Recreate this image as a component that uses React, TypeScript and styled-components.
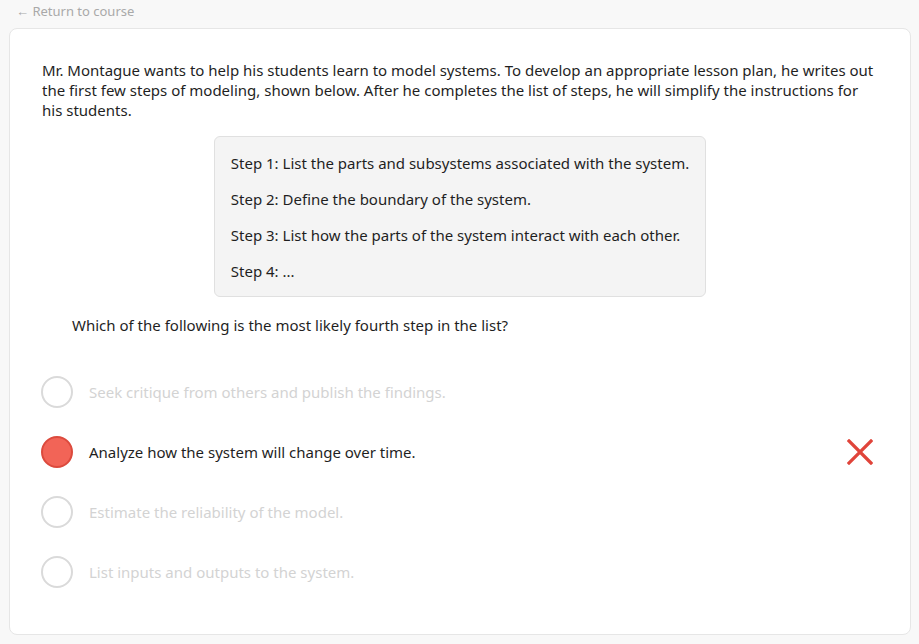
import styled, { createGlobalStyle } from "styled-components";

const GlobalStyle = createGlobalStyle`
  html, body {
    margin: 0;
    padding: 0;
    background: #f8f8f8;
  }
  body {
    font-family: "Segoe UI", "Noto Sans", "Open Sans", sans-serif;
    color: #1f1f1f;
  }
`;

interface IChoice {
  text: string;
  selected?: boolean;
}

const choices: IChoice[] = [
  { text: "Seek critique from others and publish the findings." },
  { text: "Analyze how the system will change over time.", selected: true },
  { text: "Estimate the reliability of the model." },
  { text: "List inputs and outputs to the system." },
];

const steps = [
  "Step 1: List the parts and subsystems associated with the system.",
  "Step 2: Define the boundary of the system.",
  "Step 3: List how the parts of the system interact with each other.",
  "Step 4: ...",
];

const Page = styled.div`
  padding: 3px 8px 9px 9px;
  min-height: 100vh;
  box-sizing: border-box;
  display: flex;
  flex-direction: column;
`;
const BackLink = styled.a`
  font-size: 13px;
  color: #a9a9a9;
  padding-left: 7px;
  height: 25px;
  line-height: 16px;
  text-decoration: none;
`;
const Card = styled.div`
  flex: 1;
  background: #fff;
  border: 1px solid #e6e6e6;
  border-radius: 8px;
  padding: 31px 32px 0 32px;
`;
const Prompt = styled.p`
  margin: 0;
  font-size: 15px;
  line-height: 20px;
  color: #1f1f1f;
`;
const StepBox = styled.div`
  width: fit-content;
  margin: 16px auto 0;
  background: #f4f4f4;
  border: 1px solid #e0e0e0;
  border-radius: 6px;
  padding: 16px 16px 15px;
  display: flex;
  flex-direction: column;
  gap: 16px;
`;
const Step = styled.div`
  font-size: 15px;
  line-height: 20px;
  white-space: nowrap;
`;
const Question = styled.p`
  margin: 18px 0 0 30px;
  font-size: 15px;
  line-height: 20px;
`;
const ChoiceList = styled.ul`
  list-style: none;
  margin: 41px 0 0 -1px;
  padding: 0;
  display: flex;
  flex-direction: column;
  gap: 28px;
`;
const Choice = styled.li`
  display: flex;
  align-items: center;
  height: 32px;
`;
const Radio = styled.span<{ $selected?: boolean }>`
  width: 32px;
  height: 32px;
  box-sizing: border-box;
  border-radius: 50%;
  border: 2px solid ${(p) => (p.$selected ? "#dc4a3d" : "#dadada")};
  background: ${(p) => (p.$selected ? "#f26457" : "#fff")};
  flex-shrink: 0;
`;
const ChoiceText = styled.span<{ $selected?: boolean }>`
  margin-left: 16px;
  font-size: 15px;
  color: ${(p) => (p.$selected ? "#1f1f1f" : "#d3d3d3")};
  flex: 1;
`;
const Mark = styled.svg`
  margin-right: 5px;
  flex-shrink: 0;
`;

function App() {
  return (
    <>
      <GlobalStyle />
      <Page>
        <BackLink href="#">← Return to course</BackLink>
        <Card>
          <Prompt>
            Mr. Montague wants to help his students learn to model systems. To
            develop an appropriate lesson plan, he writes out the first few
            steps of modeling, shown below. After he completes the list of
            steps, he will simplify the instructions for his students.
          </Prompt>
          <StepBox>
            {steps.map((s) => (
              <Step key={s}>{s}</Step>
            ))}
          </StepBox>
          <Question>
            Which of the following is the most likely fourth step in the list?
          </Question>
          <ChoiceList>
            {choices.map((c) => (
              <Choice key={c.text}>
                <Radio $selected={c.selected} />
                <ChoiceText $selected={c.selected}>{c.text}</ChoiceText>
                {c.selected && (
                  <Mark width="26" height="26" viewBox="0 0 26 26">
                    <path
                      d="M2 2 L24 24 M24 2 L2 24"
                      stroke="#e0443a"
                      strokeWidth="3.2"
                      strokeLinecap="square"
                    />
                  </Mark>
                )}
              </Choice>
            ))}
          </ChoiceList>
        </Card>
      </Page>
    </>
  );
}

export default App;
